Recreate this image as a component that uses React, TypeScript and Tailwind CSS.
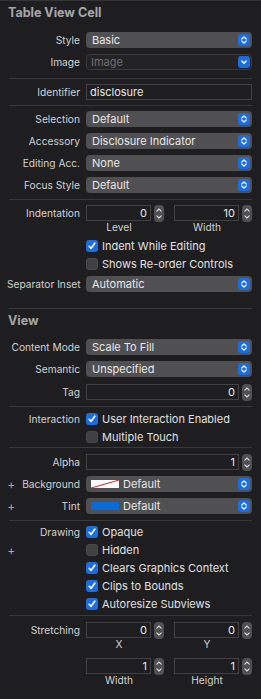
import React from "react";

const Chev2 = () => (
  <svg width="12" height="12" viewBox="0 0 12 12">
    <path d="M3.8 5 L6 2.9 L8.2 5 M3.8 7 L6 9.1 L8.2 7" stroke="#fff" strokeWidth="1.2" fill="none" strokeLinecap="round" strokeLinejoin="round" />
  </svg>
);
const ChevDown = () => (
  <svg width="12" height="12" viewBox="0 0 12 12">
    <path d="M3.8 5 L6 7.2 L8.2 5" stroke="#fff" strokeWidth="1.3" fill="none" strokeLinecap="round" strokeLinejoin="round" />
  </svg>
);

function Popup({ text, swatch, disabled }: { text: string; swatch?: React.ReactNode; disabled?: boolean }) {
  return (
    <div
      className={
        disabled
          ? "h-[16px] w-full rounded-[4px] bg-[#232325] border border-[#3a3a3c] flex items-center pl-[4px] pr-[1px]"
          : "h-[16px] w-full rounded-[4px] bg-[#505052] flex items-center pl-[6px] pr-[2px]"
      }
    >
      {swatch}
      <span className={disabled ? "flex-1 text-[11px] text-[#6e6e70] leading-none whitespace-nowrap" : "flex-1 text-[11px] text-[#e8e8e8] leading-none whitespace-nowrap"}>
        {text}
      </span>
      <div className="w-[12px] h-[12px] rounded-[3px] bg-[#1c6ee0] flex items-center justify-center">
        {disabled ? <ChevDown /> : <Chev2 />}
      </div>
    </div>
  );
}

function Stepper() {
  return (
    <div className="w-[10px] h-[17px] rounded-[4px] bg-[#505052] flex items-center justify-center shrink-0">
      <svg width="10" height="17" viewBox="0 0 10 17">
        <path d="M2.8 6.2 L5 4 L7.2 6.2 M2.8 10.8 L5 13 L7.2 10.8" stroke="#d8d8d8" strokeWidth="1.1" fill="none" strokeLinecap="round" strokeLinejoin="round" />
      </svg>
    </div>
  );
}

function Field({ value, left }: { value: string; left?: boolean }) {
  return (
    <div
      className={
        left
          ? "h-[16px] flex-1 bg-[#1e1e20] border border-[#424244] flex items-center pl-[3px] text-[11px] text-[#e8e8e8] leading-none"
          : "h-[16px] flex-1 bg-[#1e1e20] border border-[#424244] flex items-center justify-end pr-[3px] text-[11px] text-[#e8e8e8] leading-none"
      }
    >
      {value}
    </div>
  );
}

function NumField({ value }: { value: string }) {
  return (
    <div className="flex items-center gap-[3px] w-[78px]">
      <Field value={value} />
      <Stepper />
    </div>
  );
}

function Label({ label, plus }: { label?: string; plus?: boolean }) {
  return (
    <div className="w-[80px] shrink-0 flex items-center justify-between text-[10.2px] text-[#d2d2d2] leading-none whitespace-nowrap">
      <span className="pl-[7px] text-[13px] text-[#b8b8b8] font-light">{plus ? "+" : ""}</span>
      <span className="whitespace-nowrap">{label}</span>
    </div>
  );
}

function Row({ mt, label, plus, children }: { mt: string; label?: string; plus?: boolean; children: React.ReactNode }) {
  return (
    <div className={"flex h-[16px] " + mt}>
      <Label label={label} plus={plus} />
      <div className="ml-[6px] w-[166px] flex items-center">{children}</div>
    </div>
  );
}

function Check({ on }: { on: boolean }) {
  return on ? (
    <div className="w-[12px] h-[12px] rounded-[3px] bg-[#1c6ee0] flex items-center justify-center shrink-0">
      <svg width="12" height="12" viewBox="0 0 12 12">
        <path d="M3.2 6.3 L5.1 8.4 L8.8 3.2" stroke="#fff" strokeWidth="1.6" fill="none" strokeLinecap="round" strokeLinejoin="round" />
      </svg>
    </div>
  ) : (
    <div className="w-[12px] h-[12px] rounded-[3px] bg-[#414143] border border-[#4a4a4c] shrink-0" />
  );
}

function CheckRow({ mt, label, text, on, plus }: { mt: string; label?: string; text: string; on: boolean; plus?: boolean }) {
  return (
    <div className={"flex h-[18px] " + mt}>
      <Label label={label} plus={plus} />
      <div className="ml-[6px] flex items-center gap-[4px]">
        <Check on={on} />
        <span className="text-[11px] text-[#e0e0e0] leading-none whitespace-nowrap">{text}</span>
      </div>
    </div>
  );
}

function Sep({ mt }: { mt: string }) {
  return <div className={"h-px w-[243px] ml-[9px] bg-[#38383a] shrink-0 " + mt} />;
}

function SubLabels({ mt, a, b }: { mt: string; a: string; b: string }) {
  return (
    <div className={"flex h-[12px] " + mt}>
      <div className="w-[86px]" />
      <div className="w-[66px] text-center text-[10.2px] text-[#d2d2d2] leading-[12px]">{a}</div>
      <div className="w-[22px]" />
      <div className="w-[66px] text-center text-[10.2px] text-[#d2d2d2] leading-[12px]">{b}</div>
    </div>
  );
}

function Header({ text }: { text: string }) {
  return (
    <div className="h-[24px] shrink-0 flex items-center pl-[8px] text-[12.5px] font-bold text-[#a6a6a8] leading-none">{text}</div>
  );
}

export default function App() {
  return (
    <div className="w-[261px] h-[699px] bg-[#1e1e20] border-t border-[#353537] overflow-hidden font-['Inter',sans-serif] flex flex-col">
      <Header text="Table View Cell" />
      <Row mt="mt-[7px]" label="Style"><Popup text="Basic" /></Row>
      <Row mt="mt-[6px]" label="Image"><Popup text="Image" disabled /></Row>
      <Sep mt="mt-[8px]" />
      <Row mt="mt-[5px]" label="Identifier"><Field value="disclosure" left /></Row>
      <Sep mt="mt-[5px]" />
      <Row mt="mt-[5px]" label="Selection"><Popup text="Default" /></Row>
      <Row mt="mt-[6px]" label="Accessory"><Popup text="Disclosure Indicator" /></Row>
      <Row mt="mt-[6px]" label="Editing Acc."><Popup text="None" /></Row>
      <Row mt="mt-[6px]" label="Focus Style"><Popup text="Default" /></Row>
      <Sep mt="mt-[6px]" />
      <Row mt="mt-[5px]" label="Indentation">
        <div className="flex gap-[10px]">
          <NumField value="0" />
          <NumField value="10" />
        </div>
      </Row>
      <SubLabels mt="mt-[0px]" a="Level" b="Width" />
      <CheckRow mt="mt-[4px]" text="Indent While Editing" on />
      <CheckRow mt="mt-[0px]" text="Shows Re-order Controls" on={false} />
      <Row mt="mt-[3px]" label="Separator Inset"><Popup text="Automatic" /></Row>
      <Sep mt="mt-[16px]" />
      <Header text="View" />
      <Row mt="mt-[6px]" label="Content Mode"><Popup text="Scale To Fill" /></Row>
      <Row mt="mt-[6px]" label="Semantic"><Popup text="Unspecified" /></Row>
      <Row mt="mt-[7px]" label="Tag">
        <div className="flex items-center gap-[3px] w-[166px]">
          <Field value="0" />
          <Stepper />
        </div>
      </Row>
      <Sep mt="mt-[6px]" />
      <CheckRow mt="mt-[3px]" label="Interaction" text="User Interaction Enabled" on />
      <CheckRow mt="mt-[0px]" text="Multiple Touch" on={false} />
      <Sep mt="mt-[1px]" />
      <Row mt="mt-[6px]" label="Alpha">
        <div className="flex items-center gap-[3px] w-[166px]">
          <Field value="1" />
          <Stepper />
        </div>
      </Row>
      <Row mt="mt-[6px]" label="Background" plus>
        <Popup
          text="Default"
          swatch={
            <svg width="28" height="8" viewBox="0 0 28 8" className="mr-[4px] -ml-[1px] shrink-0">
              <rect x="0" y="0" width="28" height="8" fill="#fff" />
              <line x1="0" y1="8" x2="28" y2="0" stroke="#e02020" strokeWidth="1" />
            </svg>
          }
        />
      </Row>
      <Row mt="mt-[6px]" label="Tint" plus>
        <Popup text="Default" swatch={<div className="w-[28px] h-[8px] bg-[#0a6ad8] mr-[4px] -ml-[1px] shrink-0" />} />
      </Row>
      <Sep mt="mt-[6px]" />
      <CheckRow mt="mt-[2px]" label="Drawing" text="Opaque" on />
      <CheckRow mt="mt-[0px]" text="Hidden" on={false} plus />
      <CheckRow mt="mt-[0px]" text="Clears Graphics Context" on />
      <CheckRow mt="mt-[0px]" text="Clips to Bounds" on />
      <CheckRow mt="mt-[0px]" text="Autoresize Subviews" on />
      <Sep mt="mt-[2px]" />
      <Row mt="mt-[6px]" label="Stretching">
        <div className="flex gap-[10px]">
          <NumField value="0" />
          <NumField value="0" />
        </div>
      </Row>
      <SubLabels mt="mt-[0px]" a="X" b="Y" />
      <Row mt="mt-[8px]">
        <div className="flex gap-[10px]">
          <NumField value="1" />
          <NumField value="1" />
        </div>
      </Row>
      <SubLabels mt="mt-[0px]" a="Width" b="Height" />
    </div>
  );
}
